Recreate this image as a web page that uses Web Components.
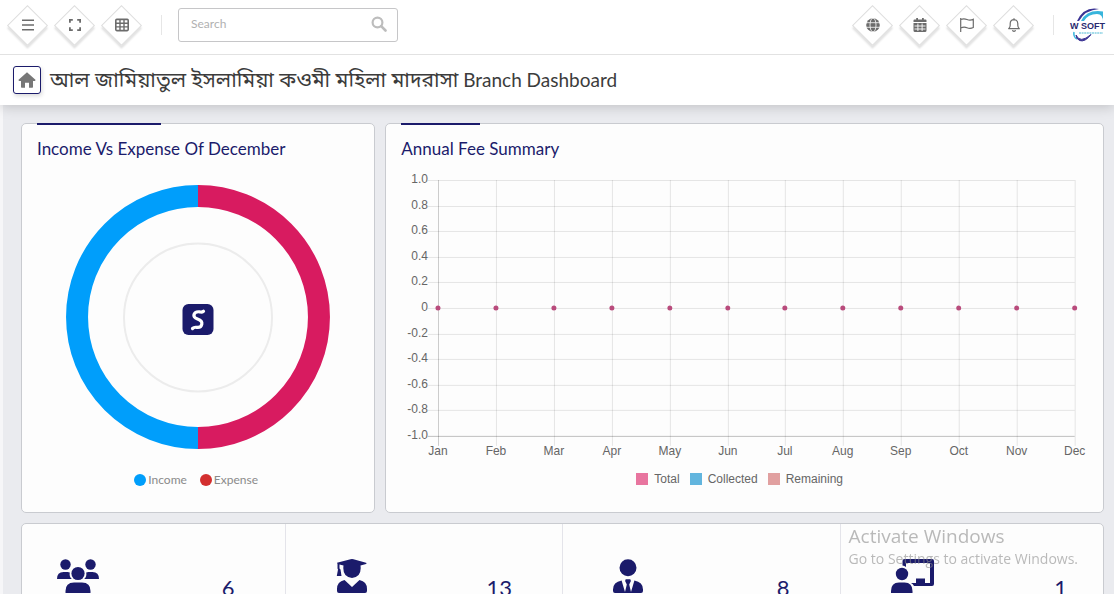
<!DOCTYPE html>
<html lang="en">
<head>
<meta charset="utf-8">
<meta name="viewport" content="width=device-width, initial-scale=1">
<title>Branch Dashboard</title>
<style>
  :root {
    --ink: #1b1b6b;
    --muted: #6c6c6c;
    --line: #c9cbd0;
    --surface: #fdfdfd;
    --page: #eaebef;
    --font: Lato, "Noto Sans Bengali", "Liberation Sans", sans-serif;
  }
  body {
    margin: 0;
    background: var(--page);
    color: #3c3c3c;
    font-family: var(--font);
  }
</style>
</head>
<body>
<school-dashboard></school-dashboard>

<script>
(() => {
  const svg = (box, body) => `<svg viewBox="${box}" aria-hidden="true">${body}</svg>`;

  const ICONS = {
    menu: svg('0 0 14 14', '<path d="M1 2.2h12M1 7h12M1 11.8h12" stroke="currentColor" stroke-width="1.5"/>'),
    expand: svg('0 0 14 14', '<path d="M1.9 4.8V1.9H4.8M9.2 1.9h2.9v2.9M12.1 9.2v2.9H9.2M4.8 12.1H1.9V9.2" fill="none" stroke="currentColor" stroke-width="1.8"/>'),
    table: svg('0 0 14 14', '<rect x=".8" y="1.4" width="12.4" height="11.2" rx="1" fill="none" stroke="currentColor" stroke-width="1.6"/><path d="M1 5.2h12M1 8.9h12M5 2v11M9 2v11" stroke="currentColor" stroke-width="1.4"/>'),
    globe: svg('0 0 14 14', '<circle cx="7" cy="7" r="6.8" fill="currentColor"/><ellipse cx="7" cy="7" rx="3" ry="7" fill="none" stroke="#fff" stroke-width=".8"/><path d="M0 4.7h14M0 9.3h14" stroke="#fff" stroke-width=".8"/>'),
    calendar: svg('0 0 14 14', '<path d="M3.2 0h1.8v1.5h4V0h1.8v1.5H12.5q1 0 1 1V4H.5V2.5q0-1 1-1h1.7zM.5 5h13v7.5q0 1.5-1.5 1.5H2Q.5 14 .5 12.5z" fill="currentColor"/><path d="M1.5 8h11M1.5 11h11M4.9 5.5v7.5M9.1 5.5v7.5" stroke="#fff" stroke-width=".9"/>'),
    flag: svg('0 0 14 14', '<path d="M.7 0v14M.7 1.5q3.1-1.4 6.3 0t6.3-.2v8.2q-3.2 1.6-6.3.2t-6.3.3" fill="none" stroke="currentColor" stroke-width="1.2"/>'),
    bell: svg('0 0 14 14', '<path d="M7 .2v1.3M1.7 10.7h10.6q-1.5-1.3-1.5-3.4V5.6Q10.7 1.8 7 1.7 3.3 1.8 3.2 5.6v1.7q0 2.1-1.5 3.4zM5.5 12.2q.2 1.2 1.5 1.2t1.5-1.2" fill="none" stroke="currentColor" stroke-width="1.2" stroke-linejoin="round"/>'),
    search: svg('0 0 16 16', '<circle cx="6.5" cy="6.5" r="4.9" fill="none" stroke="currentColor" stroke-width="2.2"/><path d="M10.2 10.2l4.3 4.3" stroke="currentColor" stroke-width="2.6" stroke-linecap="round"/>'),
    home: svg('0 0 18 16', '<path d="M9 .3 17.7 8l-.8 1H15v6q0 .7-.7.7H11v-5H7v5H3.7Q3 15.7 3 15V9H1.1L.3 8z" fill="currentColor"/>'),
    users: svg('0 0 42 34', '<g fill="currentColor"><circle cx="8.5" cy="5.5" r="5.2"/><circle cx="33.5" cy="5.5" r="5.2"/><circle cx="21" cy="14.5" r="6.6"/><path d="M0 20q0-7 6.5-7h4q1.4 0 2.3.6-.8 4.1 2 6.4zM42 20q0-7-6.5-7h-4q-1.4 0-2.3.6.8 4.1-2 6.4zM8.5 34v-2q0-8.5 8.5-8.5h8q8.5 0 8.5 8.5v2z"/></g>'),
    student: svg('0 0 32 34', '<path d="M1 3.7 14.5.3q1.5-.4 3 0L30 3.7q1.2.5 0 1.2l-5.5 1.5Q26 18 16 19 6 18 7.5 6.4L3.5 5.5v4l1 1L5.5 17H.8L2 10.5l-.5-1V5zM8.5 21l7.5 7 7.5-7q7.5 1.5 7.5 9v2q0 2-2 2H3q-2 0-2-2v-2q0-7.5 7.5-9z" fill="currentColor"/>'),
    tie: svg('0 0 30 34', '<path d="M15 .3a8.5 8.5 0 1 1 0 17 8.5 8.5 0 0 1 0-17zM8.6 21.5 12 33l1.8-7.5-1.7-3.6.6-1.6h4.6l.6 1.6-1.7 3.6L18 33l3.4-11.500q8.600 1.500 8.600 9V32q0 2-2 2H2q-2 0-2-2v-1.500q0-7.500 8.600-9z" fill="currentColor"/>'),
    teacher: svg('0 0 43 34', '<g fill="currentColor"><path d="M11.5 6.5V2q0-2 2-2H41q2 0 2 2v23q0 2-2 2H23q-1-2-3-3h5v-4.500h9V24h5V4H15v4q-1.500-1.300-3.500-1.500z"/><circle cx="11" cy="15" r="6.2"/><path d="M0 34v-2q0-8.500 8-8.500h5.500q8 0 8 8.500v2z"/></g>'),
  };

  /** Base element: fills an open shadow root from render() on first connect. */
  class ViewElement extends HTMLElement {
    constructor() {
      super();
      this.attachShadow({ mode: 'open' });
    }

    connectedCallback() {
      if (!this.shadowRoot.hasChildNodes()) {
        this.shadowRoot.innerHTML = this.render();
      }
    }
  }

  customElements.define('icon-button', class extends ViewElement {
    render() {
      return `
        <style>
          :host { display: block; }
          button {
            position: relative; display: grid; place-items: center;
            width: 41px; height: 41px; padding: 0;
            border: 0; background: none; color: var(--muted); cursor: pointer;
          }
          /* the diamond outline behind the icon */
          button::before {
            content: ""; position: absolute; inset: 6px;
            box-sizing: border-box; border: 1px solid #dedede;
            background: #fff; transform: rotate(45deg);
            box-shadow: 2px 2px 2px rgba(0, 0, 0, .12);
          }
          svg { position: relative; display: block; width: 14px; height: 14px; }
        </style>
        <button type="button" aria-label="${this.getAttribute('label')}">${ICONS[this.getAttribute('icon')]}</button>
      `;
    }
  });

  customElements.define('search-box', class extends ViewElement {
    render() {
      return `
        <style>
          :host { display: block; width: 220px; }
          form {
            display: flex; align-items: center; box-sizing: border-box; height: 34px;
            border: 1px solid #c6c6c8; border-radius: 3px; background: #fff;
          }
          input {
            flex: 1; min-width: 0; padding: 0 0 4px 12px; border: 0; outline: 0;
            background: none; font: 12px var(--font); color: #555;
          }
          input::placeholder { color: #b1b1b1; opacity: 1; }
          button { padding: 0 10px 2px; border: 0; background: none; color: #bdbdbd; }
          svg { display: block; width: 16px; height: 16px; }
        </style>
        <form role="search">
          <input type="search" placeholder="Search" aria-label="Search">
          <button type="button" aria-label="Run search">${ICONS.search}</button>
        </form>
      `;
    }
  });

  customElements.define('brand-logo', class extends ViewElement {
    render() {
      return `
        <style>
          :host { display: block; width: 34px; }
          svg { display: block; width: 100%; overflow: visible; }
        </style>
        <svg viewBox="0 0 34 34" role="img" aria-label="W Soft">
          <path d="M7 13Q14-2 29 1 15 2 9 13z" fill="#3b3494"/>
          <path d="M11 13Q17 1 33 3.500V14Q33 6 27 6 18 6 14 13z" fill="#37b5dc"/>
          <path d="M4 24q-1 5 3 7" fill="none" stroke="#37b5dc" stroke-width="1.5"/>
          <path d="M6 27q4 9 15-.5-6 8-11.500 6-3.500-2-3.500-5.500z" fill="#3b3494" stroke="#3b3494"/>
          <text x="0" y="21" font-family="Liberation Sans, sans-serif" font-size="9" font-weight="700" fill="#29296f">W SOFT</text>
          <path d="M9 25h24" stroke="#a5dcea" stroke-width="2" stroke-dasharray="2 .6"/>
        </svg>
      `;
    }
  });

  customElements.define('top-bar', class extends ViewElement {
    render() {
      return `
        <style>
          :host { display: block; background: #fff; border-bottom: 1px solid #e2e2e2; }
          header {
            display: flex; align-items: center; box-sizing: border-box;
            height: 54px; padding: 0 10px 4px 7px;
          }
          .group { display: flex; gap: 6px; }
          .end { margin-left: auto; }
          .rule { width: 1px; height: 20px; margin: 0 16px 0 19px; background: #e6e6e6; }
        </style>
        <header>
          <div class="group">
            <icon-button icon="menu" label="Menu"></icon-button>
            <icon-button icon="expand" label="Full screen"></icon-button>
            <icon-button icon="table" label="Shortcuts"></icon-button>
          </div>
          <span class="rule"></span>
          <search-box></search-box>
          <div class="group end">
            <icon-button icon="globe" label="Language"></icon-button>
            <icon-button icon="calendar" label="Calendar"></icon-button>
            <icon-button icon="flag" label="Flags"></icon-button>
            <icon-button icon="bell" label="Notifications"></icon-button>
          </div>
          <span class="rule"></span>
          <brand-logo></brand-logo>
        </header>
      `;
    }
  });

  customElements.define('page-title', class extends ViewElement {
    render() {
      return `
        <style>
          :host { display: block; background: #fff; box-shadow: 0 2px 12px rgba(0, 0, 0, .18); }
          .wrap { display: flex; align-items: center; gap: 9px; height: 50px; padding-left: 13px; }
          a {
            display: grid; place-items: center; box-sizing: border-box;
            width: 28px; height: 28px; border: 1px solid var(--ink); border-radius: 3px;
            color: #777; box-shadow: 1px 2px 4px rgba(0, 0, 0, .15);
          }
          svg { display: block; width: 18px; height: 16px; }
          h1 {
            margin: 0; padding-bottom: 2px; font-size: 19px; line-height: 32px;
            font-weight: 400; white-space: nowrap;
          }
          ::slotted([lang="bn"]) { font-size: 21px; }
        </style>
        <div class="wrap">
          <a href="#" aria-label="Home">${ICONS.home}</a>
          <h1><slot></slot></h1>
        </div>
      `;
    }
  });

  customElements.define('panel-card', class extends ViewElement {
    render() {
      return `
        <style>
          :host {
            display: block; box-sizing: border-box; padding: 0 15px;
            border: 1px solid var(--line); border-radius: 5px; background: var(--surface);
          }
          h2 {
            position: relative; width: fit-content; margin: 0; padding: 12px 0 9px;
            font-size: 17px; line-height: 26px; font-weight: 400; color: var(--ink);
          }
          /* accent sitting on the card's top border */
          h2::before {
            content: ""; position: absolute; left: 0; top: -1px;
            width: 50%; height: 2px; background: var(--ink);
          }
        </style>
        <h2>${this.getAttribute('heading')}</h2>
        <slot></slot>
      `;
    }
  });

  customElements.define('donut-chart', class extends ViewElement {
    render() {
      return `
        <style>
          :host { display: block; padding-top: 14px; }
          svg { display: block; width: 264px; max-width: 100%; margin: 0 auto; }
          ul {
            display: flex; justify-content: center; gap: 13px;
            margin: 22px 0 0; padding: 0 4px 0 0; list-style: none;
            font-size: 12px; line-height: 18px; color: #8a8a8a;
          }
          li { display: flex; align-items: center; gap: 2px; }
          li::before { content: ""; width: 12px; height: 12px; border-radius: 50%; background: var(--dot); }
        </style>
        <svg viewBox="0 0 264 264" role="img" aria-label="Income and expense, equal halves">
          <path d="M132 11a121 121 0 0 0 0 242" fill="none" stroke="#009efb" stroke-width="22"/>
          <path d="M132 11a121 121 0 0 1 0 242" fill="none" stroke="#d81b60" stroke-width="22"/>
          <circle cx="132" cy="132.5" r="74" fill="none" stroke="#ececec" stroke-width="2"/>
          <rect x="116.5" y="119" width="31" height="31" rx="6" fill="#1b1b6b"/>
          <path d="M137.5 126.200q-1.500 1.300-4 .6-4.500-.5-5.500 2.700-.8 3 3.500 4.500 5 1.700 4.300 5.200-.8 3.800-5.300 3.100-2.500-.3-4 1.200" fill="none" stroke="#fff" stroke-width="3.200" stroke-linecap="round"/>
        </svg>
        <ul>
          <li style="--dot: #009efb">Income</li>
          <li style="--dot: #d32f2f">Expense</li>
        </ul>
      `;
    }
  });

  customElements.define('fee-chart', class extends ViewElement {
    render() {
      const months = ['Jan', 'Feb', 'Mar', 'Apr', 'May', 'Jun', 'Jul', 'Aug', 'Sep', 'Oct', 'Nov', 'Dec'];
      const ticks = ['1.0', '0.8', '0.6', '0.4', '0.2', '0', '-0.2', '-0.4', '-0.6', '-0.8', '-1.0'];
      // plot area: x 37..674, y 9..265
      const px = (i) => Math.round(37 + i * 637 / 11);
      const py = (i) => Math.round(9 + i * 256 / 10);

      const rows = ticks.map((t, i) => `
        <path d="M27 ${py(i)}.5H674" class="${i === 10 ? 'base' : ''}"/>
        <text x="27" y="${py(i) + 3}" text-anchor="end">${t}</text>`).join('');
      const cols = months.map((m, i) => `
        <path d="M${px(i)}.5 9V275" class="${i === 0 ? 'axis' : ''}"/>
        <text x="${px(i)}" y="284" text-anchor="middle">${m}</text>`).join('');
      const dots = months.map((m, i) => `<circle cx="${px(i)}" cy="137" r="2.5"/>`).join('');

      return `
        <style>
          :host { display: block; font-family: "Liberation Sans", Arial, sans-serif; }
          svg { display: block; width: 100%; overflow: visible; }
          path { stroke: #000; stroke-opacity: .1; }
          path.axis { stroke-opacity: .2; }
          path.base { stroke-opacity: .25; }
          text { font-size: 12px; fill: #666; }
          circle { fill: #b94b7c; }
          ul {
            display: flex; justify-content: center; gap: 10px;
            margin: 5px 0 0; padding: 0 10px 26px 0; list-style: none;
            font-size: 12px; line-height: 14px; color: #666;
          }
          li { display: flex; align-items: center; gap: 6px; }
          li::before { content: ""; width: 12px; height: 12px; background: var(--swatch); }
        </style>
        <svg viewBox="0 0 687 296" role="img" aria-label="Fees per month">${rows}${cols}${dots}</svg>
        <ul>
          <li style="--swatch: #e8759f">Total</li>
          <li style="--swatch: #62b5de">Collected</li>
          <li style="--swatch: #e1a0a0">Remaining</li>
        </ul>
      `;
    }
  });

  customElements.define('stat-tile', class extends ViewElement {
    render() {
      return `
        <style>
          :host {
            display: flex; justify-content: space-between; align-items: flex-start;
            padding: 35px 50px; color: var(--ink);
          }
          svg { display: block; height: 34px; }
          output { padding-top: 15px; font-size: 22px; line-height: 28px; }
        </style>
        ${ICONS[this.getAttribute('icon')]}
        <output><slot></slot></output>
      `;
    }
  });

  customElements.define('stat-strip', class extends ViewElement {
    render() {
      return `
        <style>
          :host {
            display: block; overflow: hidden; border: 1px solid var(--line);
            border-radius: 5px; background: var(--surface);
          }
          /* outer tiles bleed past the card so all four keep equal gutters */
          .row { display: grid; grid-template-columns: repeat(4, 1fr); margin: 0 -14px 0 -15px; }
          ::slotted(*:not(:first-child)) { border-left: 1px solid #e4e4ea; }
        </style>
        <div class="row"><slot></slot></div>
      `;
    }
  });

  customElements.define('activation-note', class extends ViewElement {
    render() {
      return `
        <style>
          :host {
            position: fixed; right: 36px; bottom: 25px; pointer-events: none;
            font-family: "Open Sans", sans-serif; color: rgba(140, 140, 140, .6);
          }
          p { margin: 0; font-size: 14px; line-height: 20px; }
          p.lead { font-size: 19px; line-height: 26px; }
        </style>
        <p class="lead">Activate Windows</p>
        <p>Go to Settings to activate Windows.</p>
      `;
    }
  });

  customElements.define('school-dashboard', class extends ViewElement {
    render() {
      return `
        <style>
          :host { display: block; height: 100vh; overflow: hidden; }
          top-bar { position: relative; z-index: 2; }
          page-title { position: relative; z-index: 1; }
          main {
            display: grid; grid-template-columns: repeat(12, 1fr); gap: 10px;
            padding: 18px 10px 18px 18px; border-left: 3px solid #f6f6f8;
          }
          .third { grid-column: span 4; }
          .rest { grid-column: span 8; }
          stat-strip { grid-column: 1 / -1; }
        </style>
        <top-bar></top-bar>
        <page-title><span lang="bn">আল জামিয়াতুল ইসলামিয়া কওমী মহিলা মাদরাসা</span> Branch Dashboard</page-title>
        <main>
          <panel-card class="third" heading="Income Vs Expense Of December">
            <donut-chart></donut-chart>
          </panel-card>
          <panel-card class="rest" heading="Annual Fee Summary">
            <fee-chart></fee-chart>
          </panel-card>
          <stat-strip>
            <stat-tile icon="users">6</stat-tile>
            <stat-tile icon="student">13</stat-tile>
            <stat-tile icon="tie">8</stat-tile>
            <stat-tile icon="teacher">1</stat-tile>
          </stat-strip>
        </main>
        <activation-note></activation-note>
      `;
    }
  });
})();
</script>
</body>
</html>
